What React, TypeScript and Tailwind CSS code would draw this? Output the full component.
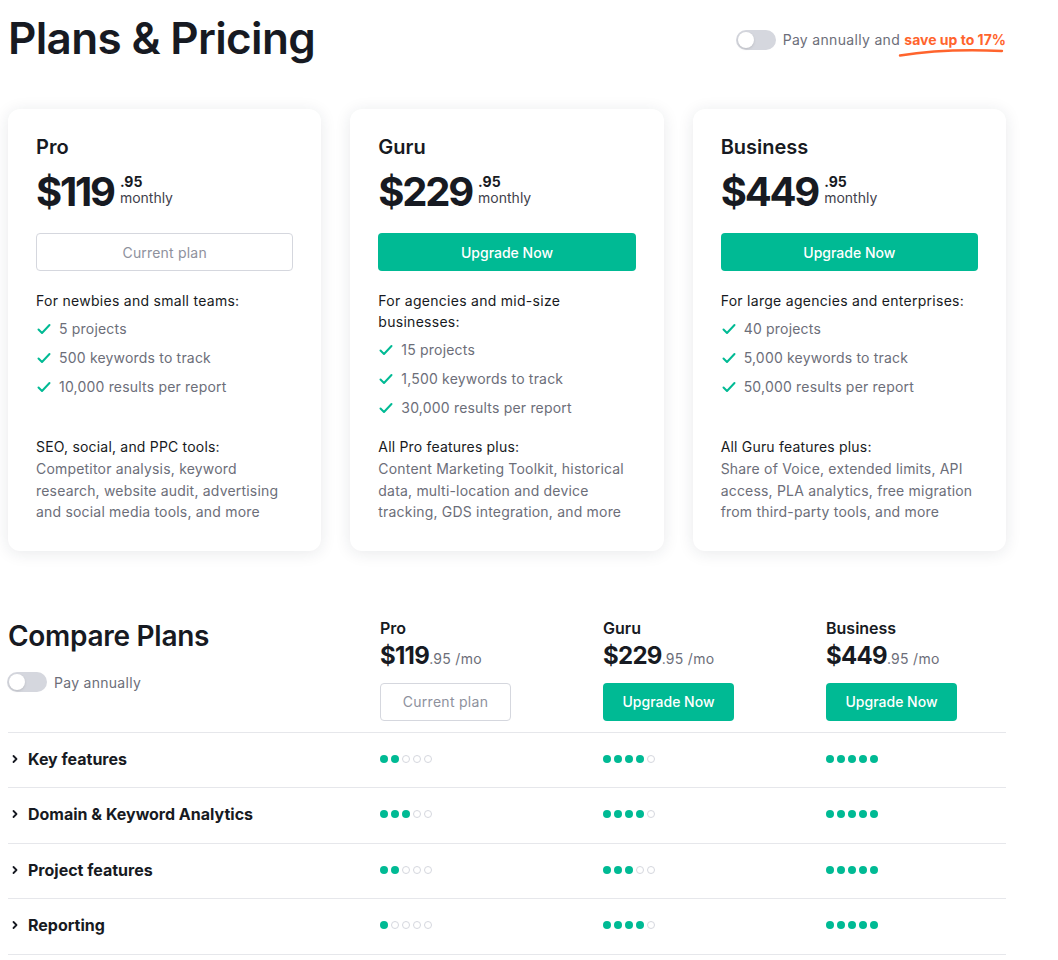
import React from 'react';

const font = { fontFamily: 'Inter, "Noto Sans", sans-serif' };

interface Plan {
  name: string;
  price: string;
  current?: boolean;
  audience: string;
  items: string[];
  extraTitle: string;
  extra: string;
}

const plans: Plan[] = [
  {
    name: 'Pro',
    price: '$119',
    current: true,
    audience: 'For newbies and small teams:',
    items: ['5 projects', '500 keywords to track', '10,000 results per report'],
    extraTitle: 'SEO, social, and PPC tools:',
    extra: 'Competitor analysis, keyword research, website audit, advertising and social media tools, and more',
  },
  {
    name: 'Guru',
    price: '$229',
    audience: 'For agencies and mid-size businesses:',
    items: ['15 projects', '1,500 keywords to track', '30,000 results per report'],
    extraTitle: 'All Pro features plus:',
    extra: 'Content Marketing Toolkit, historical data, multi-location and device tracking, GDS integration, and more',
  },
  {
    name: 'Business',
    price: '$449',
    audience: 'For large agencies and enterprises:',
    items: ['40 projects', '5,000 keywords to track', '50,000 results per report'],
    extraTitle: 'All Guru features plus:',
    extra: 'Share of Voice, extended limits, API access, PLA analytics, free migration from third-party tools, and more',
  },
];

const rows = [
  { label: 'Key features', scores: [2, 4, 5] },
  { label: 'Domain & Keyword Analytics', scores: [3, 4, 5] },
  { label: 'Project features', scores: [2, 3, 5] },
  { label: 'Reporting', scores: [1, 4, 5] },
];

const Toggle = () => (
  <span className="relative inline-block w-10 h-5 rounded-full bg-[#d5d7de] shrink-0">
    <span className="absolute left-[2px] top-[2px] w-4 h-4 rounded-full bg-white shadow-sm"></span>
  </span>
);

const Check = () => (
  <svg className="w-4 h-4 shrink-0" viewBox="0 0 16 16" fill="none" stroke="#00ba94" strokeWidth={2} strokeLinecap="round" strokeLinejoin="round">
    <path d="M2.5 8.5l3.5 3.5 7.5-8" />
  </svg>
);

const Dots = ({ n }: { n: number }) => (
  <div className="flex items-center gap-[3px]">
    {[0, 1, 2, 3, 4].map((i) =>
      i < n ? (
        <span key={i} className="w-[8px] h-[8px] rounded-full bg-[#00ba94]"></span>
      ) : (
        <span key={i} className="w-[8px] h-[8px] rounded-full border border-[#d5d7de]"></span>
      )
    )}
  </div>
);

const PlanCard = ({ plan }: { plan: Plan }) => (
  <div className="bg-white rounded-xl shadow-[0_2px_16px_rgba(30,35,60,0.1)] px-7 pt-[26px] pb-[28px] tracking-[0.012em]">
    <div className="text-[20px] font-semibold text-[#171a22] leading-6 tracking-normal">{plan.name}</div>
    <div className="flex items-start mt-[11px]">
      <span className="text-[40px] font-bold text-[#171a22] leading-[44px] tracking-[-0.055em]">{plan.price}</span>
      <span className="ml-[6px] flex flex-col mt-[5px] tracking-normal">
        <span className="text-[14px] font-bold text-[#171a22] leading-[14px]">.95</span>
        <span className="text-[14px] text-[#3f414c] leading-[18px]">monthly</span>
      </span>
    </div>
    {plan.current ? (
      <button className="mt-[19px] w-full h-[38px] rounded-[4px] border border-[#d5d7de] text-[14px] text-[#8e919d] bg-white">
        Current plan
      </button>
    ) : (
      <button className="mt-[19px] w-full h-[38px] rounded-[4px] bg-[#00ba94] text-[14px] font-medium text-white tracking-normal">
        Upgrade Now
      </button>
    )}
    <div className="mt-[19px] h-[146px]">
      <div className="text-[14px] text-[#171a22] leading-[21px] tracking-[0.02em]">{plan.audience}</div>
      <ul className="mt-[7px] flex flex-col gap-[8px]">
        {plan.items.map((item) => (
          <li key={item} className="flex items-center gap-[7px] text-[14px] text-[#6c6e79] leading-[21px]">
            <Check />
            {item}
          </li>
        ))}
      </ul>
    </div>
    <div className="text-[14px] text-[#171a22] leading-[21px]">{plan.extraTitle}</div>
    <p className="text-[14px] text-[#6c6e79] leading-[21.5px] mt-[1px]">{plan.extra}</p>
  </div>
);

const App: React.FC = () => {
  return (
    <div className="min-h-screen bg-white" style={font}>
      <div className="w-[998px] ml-2">
        {/* Header */}
        <div className="flex items-start justify-between pt-[10px]">
          <h1 className="text-[44px] font-semibold text-[#171a22] leading-[56px] tracking-[-0.015em]">Plans &amp; Pricing</h1>
          <div className="flex items-center gap-[7px] mt-[19px] tracking-[0.02em]">
            <Toggle />
            <span className="text-[14px] text-[#6c6e79]">
              Pay annually and{' '}
              <span className="relative font-bold text-[#ff642d] tracking-normal">
                save up to 17%
                <svg className="absolute left-[-6px] top-[17px] w-[106px] h-[9px]" viewBox="0 0 106 9" fill="none">
                  <path d="M2 7.5C30 3 70 1.5 104 3" stroke="#ff642d" strokeWidth={2.4} strokeLinecap="round" />
                </svg>
              </span>
            </span>
          </div>
        </div>

        {/* Cards */}
        <div className="grid grid-cols-3 gap-[29px] mt-[43px]">
          {plans.map((p) => (
            <PlanCard key={p.name} plan={p} />
          ))}
        </div>

        {/* Compare */}
        <div className="grid grid-cols-[372px_223px_223px_1fr] mt-[67px] pb-[12px]">
          <div>
            <h2 className="text-[28px] font-semibold text-[#171a22] leading-[36px] tracking-[-0.01em]">Compare Plans</h2>
            <div className="flex items-center gap-[7px] mt-[18px] -ml-[1px]">
              <Toggle />
              <span className="text-[14px] text-[#6c6e79] tracking-[0.02em]">Pay annually</span>
            </div>
          </div>
          {plans.map((p) => (
            <div key={p.name}>
              <div className="text-[16px] font-semibold text-[#171a22] leading-5">{p.name}</div>
              <div className="flex items-baseline mt-[3px]">
                <span className="text-[24px] font-bold text-[#171a22] leading-[30px] tracking-[-0.03em]">{p.price}</span>
                <span className="text-[14px] text-[#6c6e79] tracking-[0.02em]">.95 /mo</span>
              </div>
              {p.current ? (
                <button className="mt-[12px] w-[131px] h-[38px] rounded-[4px] border border-[#d5d7de] text-[14px] text-[#8e919d] bg-white tracking-[0.02em]">
                  Current plan
                </button>
              ) : (
                <button className="mt-[12px] w-[131px] h-[38px] rounded-[4px] bg-[#00ba94] text-[14px] font-medium text-white">
                  Upgrade Now
                </button>
              )}
            </div>
          ))}
        </div>

        <div className="border-t border-[#e6e7eb] -mt-[1px]">
          {rows.map((r) => (
            <div key={r.label} className="grid grid-cols-[372px_223px_223px_1fr] items-center h-[55.5px] border-b border-[#e6e7eb] pb-[2px]">
              <div className="flex items-center gap-[8px] pl-[2px]">
                <svg className="w-[10px] h-[10px]" viewBox="0 0 10 10" fill="none" stroke="#171a22" strokeWidth={1.8} strokeLinecap="round" strokeLinejoin="round">
                  <path d="M3.5 2l3 3-3 3" />
                </svg>
                <span className="text-[16px] font-bold text-[#171a22]">{r.label}</span>
              </div>
              {r.scores.map((s, i) => (
                <Dots key={i} n={s} />
              ))}
            </div>
          ))}
        </div>
      </div>
    </div>
  );
};

export default App;
